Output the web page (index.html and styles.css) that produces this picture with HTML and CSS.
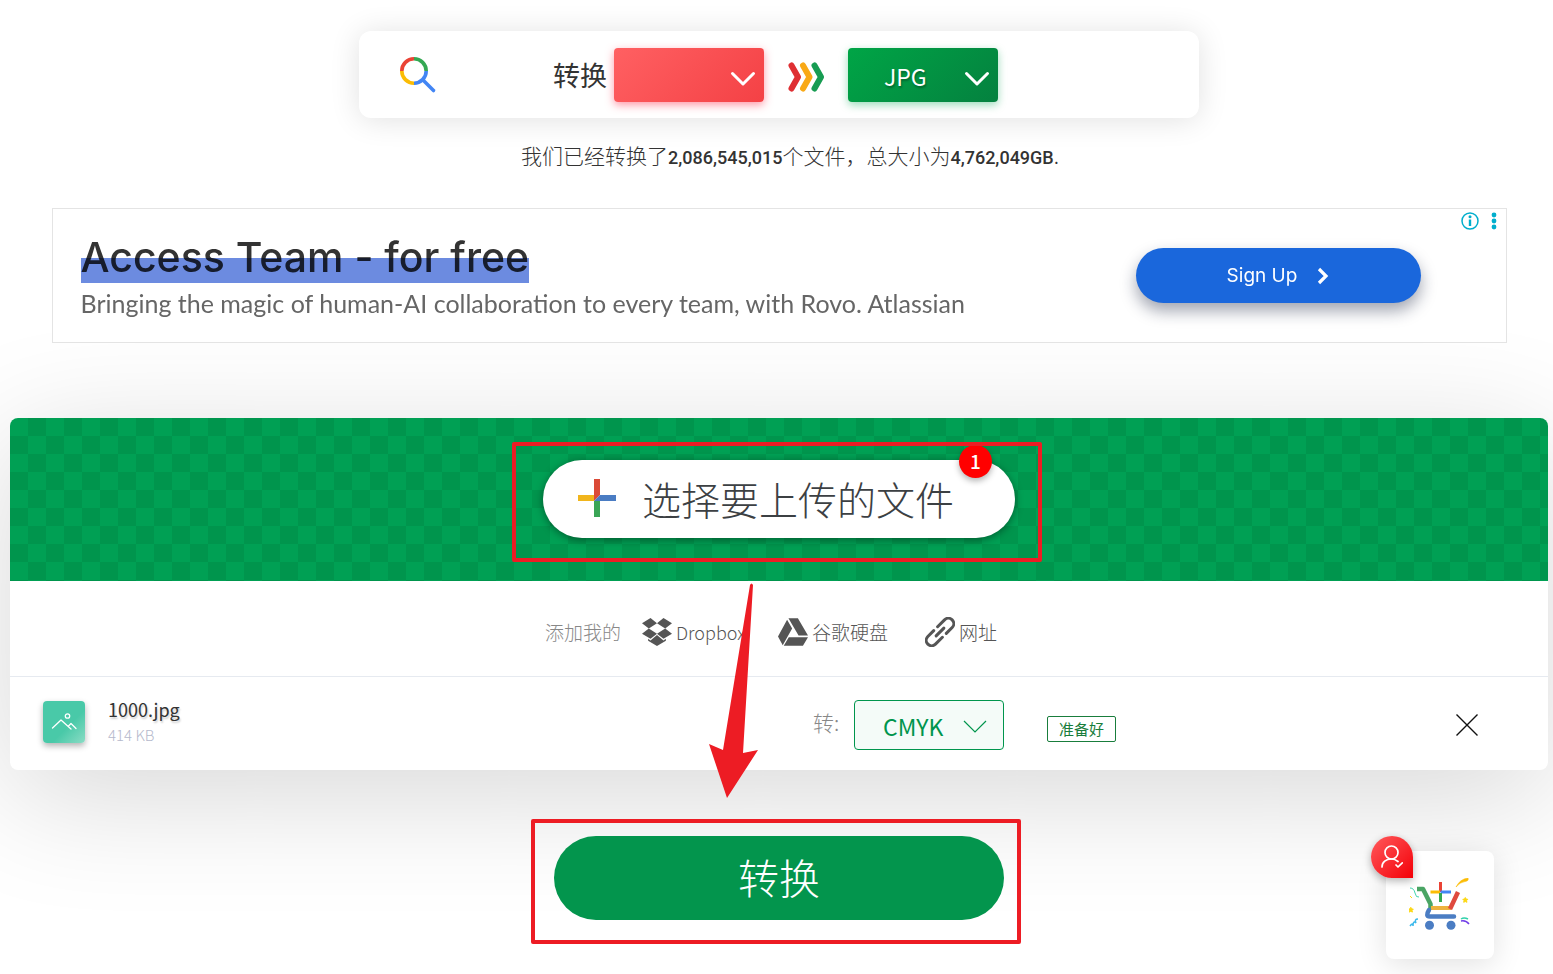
FILE: index.html
```html
<!DOCTYPE html>
<html lang="zh-CN">
<head>
  <meta charset="UTF-8" />
  <meta name="viewport" content="width=device-width, initial-scale=1.0" />
  <title>转换 JPG</title>
  <link rel="stylesheet" href="styles.css">
</head>
<body>
  <div class="page">
    <form class="search-bar">
      <svg class="search-icon" width="38" height="38" viewBox="0 0 38 38" fill="none" stroke-width="3.6">
        <path d="M2.8 15A12.2 12.2 0 0 1 15 2.8" stroke="#ea4335"/>
        <path d="M15 2.8A12.2 12.2 0 0 1 27.2 15" stroke="#34a853"/>
        <path d="M15 27.2A12.2 12.2 0 0 1 2.8 15" stroke="#fbbc05"/>
        <path d="M27.2 15A12.2 12.2 0 0 1 15 27.2" stroke="#4285f4"/>
        <path d="M24 24L34.5 34.5" stroke="#4285f4" stroke-linecap="round"/>
      </svg>
      <div class="formats">
        <label class="formats-label" for="from">转换</label>
        <div class="format from">
          <select id="from"><option value=""></option></select>
          <svg width="26" height="16" viewBox="0 0 26 16" fill="none" stroke="#fff" stroke-width="3" stroke-linecap="round" stroke-linejoin="round"><path d="M2.5 2.5L13 13L23.5 2.5"/></svg>
        </div>
        <svg class="chevrons" width="38" height="30" viewBox="0 0 38 30" fill="none" stroke-width="6" stroke-linecap="round" stroke-linejoin="round">
          <path d="M3.5 3.5L10 15L3.5 26.5" stroke="#df2f33"/>
          <path d="M15 3.5L21.5 15L15 26.5" stroke="#f9a916"/>
          <path d="M26.5 3.5L33 15L26.5 26.5" stroke="#179c52"/>
        </svg>
        <div class="format to">
          <select aria-label="目标格式"><option>JPG</option></select>
          <svg width="26" height="16" viewBox="0 0 26 16" fill="none" stroke="#fff" stroke-width="3" stroke-linecap="round" stroke-linejoin="round"><path d="M2.5 2.5L13 13L23.5 2.5"/></svg>
        </div>
      </div>
    </form>

    <p class="stats">我们已经转换了<b>2,086,545,015</b>个文件，总大小为<b>4,762,049GB</b>.</p>

    <section class="ad">
      <div class="ad-copy">
        <h2>Access Team - for free</h2>
        <p>Bringing the magic of human-AI collaboration to every team, with Rovo. Atlassian</p>
      </div>
      <a class="ad-button" href="#">Sign Up
        <svg width="12" height="18" viewBox="0 0 12 18" fill="none" stroke="#fff" stroke-width="3.2"><path d="M2 2L9 9L2 16"/></svg>
      </a>
      <div class="ad-choices">
        <svg width="18" height="18" viewBox="0 0 18 18"><circle cx="9" cy="9" r="8" fill="none" stroke="#00aecd" stroke-width="1.5"/><circle cx="9" cy="4.8" r="1.5" fill="#00aecd"/><path d="M7.8 7.5h2.4v6.5h-2.4z" fill="#00aecd"/></svg>
        <svg width="6" height="18" viewBox="0 0 6 18" fill="#00aecd"><circle cx="3" cy="3" r="2.4"/><circle cx="3" cy="9" r="2.4"/><circle cx="3" cy="15" r="2.4"/></svg>
      </div>
    </section>

    <main class="panel">
      <div class="drop-zone">
        <div class="upload">
          <button class="upload-button" type="button">
            <svg width="38" height="38" viewBox="0 0 38 38">
              <path d="M16 0h6v16l-6 6z" fill="#db4a37"/>
              <path d="M0 16h16v6H0z" fill="#f1b51c"/>
              <path d="M22 16h16v6H16z" fill="#4a7cc3"/>
              <path d="M16 22h6v16h-6z" fill="#3aa556"/>
            </svg>
            选择要上传的文件
          </button>
          <span class="count">1</span>
        </div>
      </div>

      <div class="sources">
        <span class="sources-label">添加我的</span>
        <a class="source dropbox" href="#">
          <svg width="30" height="28" viewBox="0 0 88 82"><path d="M25 0L44 15L20 31L0 15zM63 0L88 15L68 31L44 15zM20 31L44 46L25 61L0 46zM68 31L88 46L63 61L44 46zM18 61L25 66L44 50L63 66L70 61V67L44 82L18 67z"/></svg>
          Dropbox
        </a>
        <a class="source drive" href="#">
          <svg width="30" height="28" viewBox="0 0 89 81"><path d="M31 0H59L89 51H61zM27 4L42 30L14 80L0 54zM32 56H89L74 81H17z"/></svg>
          谷歌硬盘
        </a>
        <a class="source link" href="#">
          <svg class="link-icon" width="30" height="30" viewBox="0 0 30 30"><g transform="rotate(-45 15 15)" stroke-width="3" stroke-linecap="round"><path d="M11.5 9.6H3.2a5.4 5.4 0 0 0 0 10.8H13"/><path d="M18.5 20.4h8.3a5.4 5.4 0 0 0 0-10.8H17"/><path d="M9.500 15h11"/></g></svg>
          网址
        </a>
      </div>

      <div class="file-row">
        <div class="thumb">
          <svg width="26" height="18" viewBox="0 0 26 18" fill="none" stroke="#fff" stroke-width="1.3" stroke-linecap="round" stroke-linejoin="round"><circle cx="16.5" cy="3" r="2.2"/><path d="M1.5 15L10 7L20 16M17.5 13L20 10.5L25 15.5"/></svg>
        </div>
        <div class="file-info">
          <div class="file-name">1000.jpg</div>
          <div class="file-size">414 KB</div>
        </div>
        <label class="to-label" for="target">转:</label>
        <div class="format target">
          <select id="target"><option>CMYK</option></select>
          <svg width="24" height="14" viewBox="0 0 24 14" fill="none" stroke="#00954d" stroke-width="1.2"><path d="M1 1L12 12L23 1"/></svg>
        </div>
        <span class="status">准备好</span>
        <button class="remove" type="button" aria-label="删除">
          <svg width="24" height="24" viewBox="0 0 24 24" stroke="#111" stroke-width="1.4"><path d="M1.5 1.5L22.5 22.5M22.5 1.5L1.5 22.5"/></svg>
        </button>
      </div>

      <svg class="arrow" width="50" height="216" viewBox="0 0 50 216"><path d="M41 2Q42.5 -1 44 2L34 170L49 167L18 215L0 161L14 167z" fill="#ed1c24"/></svg>
    </main>

    <div class="submit">
      <button class="convert" type="button">转换</button>
    </div>
  </div>

  <a class="cart" href="#" aria-label="购物车">
    <svg class="cart-icon" width="62" height="54" viewBox="0 0 62 54" fill="none">
      <path d="M8 11H14L21.5 26V31" stroke="#4aa564" stroke-width="4.5" stroke-linejoin="round"/>
      <path d="M22 30H42" stroke="#edb23e" stroke-width="4"/>
      <path d="M41 31L49 14" stroke="#df4a3e" stroke-width="4.5"/>
      <path d="M20 32Q16 38.5 21 38.5H45" stroke="#4b7dc3" stroke-width="4.5" stroke-linecap="round"/>
      <circle cx="20.5" cy="47.3" r="4.5" fill="#4b7dc3"/><circle cx="42" cy="47.3" r="4.5" fill="#4b7dc3"/>
      <path d="M31.5 4V14" stroke="#ea4335" stroke-width="3"/>
      <path d="M21.5 14H31" stroke="#fbbc05" stroke-width="3"/>
      <path d="M31.5 14H42" stroke="#4285f4" stroke-width="3"/>
      <path d="M31.5 15V24" stroke="#34a853" stroke-width="3"/>
      <path d="M47 9Q51 1 59 0Q60 3 56 3.5Q51 4 47 9z" fill="#fbbc05" stroke="#fbbc05" stroke-width=".6"/>
      <path d="M1 10Q5 10 6 15T10 19" stroke="#41d5ad"/>
      <path d="M1 18l2 2" stroke="#fcd813"/>
      <path d="M56.3 19.5l.8 1.6 1.7.2-1.2 1.3.3 1.7-1.6-.8-1.6.8.3-1.7-1.2-1.3 1.7-.2zM1.8 29.3l.8 1.6 1.7.2-1.2 1.3.3 1.7-1.6-.8-1.6.8.3-1.7-1.2-1.3 1.7-.2z" stroke="#fcd813" fill="#fcd813"/>
      <path d="M1 48q3-4 3 0q0-6 3-3q-2-4 2-4" stroke="#3bb8eb" stroke-width="1.5"/>
      <path d="M52 41q3-2 7 0" stroke="#31d2ab" stroke-width="1.5"/>
      <path d="M52 43q5-1 8 3" stroke="#713de8" stroke-width="1.5"/>
    </svg>
    <span class="cart-badge">
      <svg width="22" height="24" viewBox="0 0 22 24" fill="none" stroke="#fff" stroke-width="1.7" stroke-linecap="round" stroke-linejoin="round"><circle cx="10.5" cy="7.5" r="6.5"/><path d="M1 22C1 17 5 14 10.5 14Q14 14 17 16.5M15 20L17 22L21.3 17.8"/></svg>
    </span>
  </a>
</body>
</html>
```

FILE: styles.css
```css
* {
  box-sizing: border-box;
}
body {
  margin: 0;
  background: #fff;
  font-family: "Noto Sans CJK SC", sans-serif;
  font-weight: 300;
  color: #333;
}
button, select {
  font-family: inherit;
  font-weight: inherit;
}
.page {
  display: flex;
  flex-direction: column;
  align-items: center;
  padding: 31px 5px 54px 10px;
}

/* search bar */
.search-bar {
  display: flex;
  align-items: center;
  width: 100%;
  max-width: 840px;
  height: 87px;
  padding-left: 40px;
  border-radius: 12px;
  background: #fff;
  box-shadow: 0 2px 30px rgba(0,0,0,0.12);
}
.formats {
  display: flex;
  align-items: center;
  margin-left: 116px;
}
.formats-label {
  width: 61px;
  font-size: 27px;
  font-weight: 400;
  line-height: 40px;
}
.chevrons {
  margin: 4px 22px 0 24px;
}
.format {
  position: relative;
}
.format select {
  appearance: none;
  display: block;
  width: 150px;
  height: 54px;
  padding: 2px 52px 0 36px;
  border: 0;
  border-radius: 4px;
  font-size: 23px;
  font-weight: 400;
  color: #fff;
}
.format svg {
  position: absolute;
  right: 8px;
  top: 23px;
  pointer-events: none;
}
.from select {
  background: linear-gradient(135deg, #ff6062, #f44145);
  box-shadow: 0 3px 8px rgba(255,50,80,0.5);
}
.to select {
  background: linear-gradient(135deg, #00a546, #04813f);
  box-shadow: 0 3px 8px rgba(0,165,80,0.4);
  text-shadow: 1px 2px 2px rgba(0,0,0,0.3);
}
.stats {
  margin: 22px 0 0 22px;
  font-size: 21px;
  line-height: 30px;
}
.stats b {
  font-family: Roboto, sans-serif;
  font-size: 18px;
  font-weight: 500;
  line-height: 1;
}

/* ad banner */
.ad {
  position: relative;
  display: flex;
  align-items: center;
  justify-content: space-between;
  width: calc(100% - 83px);
  height: 135px;
  margin-top: 38px;
  padding: 0 85px 0 28px;
  border: 1px solid #e4e4e4;
  background: #fff;
  z-index: 1;
}
.ad h2 {
  position: relative;
  width: fit-content;
  margin: 0;
  font: 500 41px/52px Inter, sans-serif;
}
.ad h2::after {
  content: "";
  position: absolute;
  left: 0;
  right: 0;
  bottom: 0;
  height: 25px;
  background: #6c8be0;
  mix-blend-mode: multiply;
}
.ad p {
  margin: 3px 0 0;
  font: 400 25px/34px Lato, sans-serif;
  color: #666;
}
.ad-button {
  display: flex;
  align-items: center;
  justify-content: center;
  gap: 20px;
  width: 285px;
  height: 55px;
  border-radius: 28px;
  background: #1a67dc;
  box-shadow: 0 8px 16px rgba(20,30,60,0.4);
  font: 400 19px/28px Inter, sans-serif;
  color: #fff;
  text-decoration: none;
}
.ad-choices {
  position: absolute;
  top: 3px;
  right: 9px;
  display: flex;
  gap: 12px;
}

/* converter */
.panel {
  position: relative;
  width: 100%;
  margin-top: 75px;
  border-radius: 8px;
  background: #fff;
  box-shadow: 0 25px 125px rgba(0,0,0,0.16);
}
.drop-zone {
  display: flex;
  justify-content: center;
  padding: 42px 0 43px;
  border-radius: 8px 8px 0 0;
  background: conic-gradient(#00954d 25%, #00a054 0 50%, #00954d 0 75%, #00a054 0) 0 0 / 36px 36px;
}
.upload {
  position: relative;
}
.upload-button {
  display: flex;
  align-items: center;
  gap: 26px;
  width: 472px;
  height: 78px;
  padding: 0 0 2px 35px;
  border: 0;
  border-radius: 39px;
  background: #fff;
  box-shadow: 0 2px 8px rgba(0,0,0,0.4);
  font-size: 39px;
  color: #3c4043;
}
.upload::after, .submit::after {
  content: "";
  position: absolute;
  border: 4px solid #ed1c24;
  border-radius: 2px;
  pointer-events: none;
}
.upload::after {
  inset: -18px -27px -24px -31px;
}
.count {
  position: absolute;
  top: -15px;
  right: 23px;
  width: 33px;
  height: 33px;
  border-radius: 50%;
  background: #f00;
  box-shadow: 0 3px 6px rgba(0,0,0,0.3);
  font-size: 19px;
  font-weight: 500;
  line-height: 32px;
  text-align: center;
  color: #fff;
}
.sources {
  display: flex;
  align-items: center;
  height: 96px;
  padding: 6px 0 0 535px;
  border-bottom: 1px solid #e6eaf0;
  font-size: 19px;
}
.sources-label {
  width: 97px;
  color: #888;
}
.source {
  display: flex;
  align-items: center;
  gap: 4px;
  color: #555;
  text-decoration: none;
}
.source svg {
  fill: #555;
}
.source .link-icon {
  fill: none;
  stroke: #555;
}
.dropbox {
  width: 136px;
  font-size: 18px;
}
.drive {
  width: 147px;
}
.file-row {
  display: flex;
  align-items: center;
  height: 93px;
  padding: 0 69px 0 33px;
}
.thumb {
  display: flex;
  align-items: center;
  justify-content: center;
  width: 42px;
  height: 42px;
  margin: 0 23px 4px 0;
  border-radius: 4px;
  background: linear-gradient(135deg, #49c9a8 60%, #8bdcc5);
  box-shadow: 0 3px 6px rgba(0,0,0,0.3);
}
.file-info {
  flex: 1;
  padding-bottom: 6px;
}
.file-name {
  font-size: 18px;
  font-weight: 400;
  line-height: 28px;
  text-shadow: 1px 2px 2px rgba(0,0,0,0.2);
}
.file-size {
  font-size: 15px;
  line-height: 24px;
  color: #b5b9cc;
}
.to-label {
  width: 41px;
  padding-bottom: 4px;
  font-size: 21px;
  color: #888;
}
.target {
  margin-top: 3px;
}
.target select {
  height: 50px;
  padding-left: 28px;
  border: 1px solid #00954d;
  background: #f4fbf8;
  color: #00954d;
}
.target svg {
  right: 17px;
  top: 20px;
}
.status {
  margin: 11px 339px 0 43px;
  width: 69px;
  border: 1px solid #197d3c;
  border-radius: 2px;
  font-size: 15px;
  font-weight: 400;
  line-height: 24px;
  text-align: center;
  color: #197d3c;
}
.remove {
  display: flex;
  margin-top: 3px;
  padding: 0;
  border: 0;
  background: none;
}
.arrow {
  position: absolute;
  left: 699px;
  top: 165px;
  z-index: 1;
}
.submit {
  position: relative;
  margin-top: 66px;
}
.submit::after {
  inset: -17px -17px -24px -23px;
}
.convert {
  display: block;
  width: 450px;
  height: 84px;
  padding: 0 0 4px;
  border: 0;
  border-radius: 42px;
  background: #03954d;
  font-size: 41px;
  color: #fff;
}

/* floating cart */
.cart {
  position: fixed;
  right: 59px;
  bottom: 15px;
  display: flex;
  align-items: center;
  justify-content: center;
  width: 108px;
  height: 108px;
  border-radius: 8px;
  background: #fff;
  box-shadow: 0 5px 30px rgba(0,0,0,0.12);
}
.cart-badge {
  position: absolute;
  left: -15px;
  top: -15px;
  display: flex;
  align-items: center;
  justify-content: center;
  width: 42px;
  height: 42px;
  border-radius: 21px 21px 0 21px;
  background: linear-gradient(135deg, #ff5a5c, #f40008);
  box-shadow: 0 3px 8px rgba(0,0,0,0.3);
}
```
